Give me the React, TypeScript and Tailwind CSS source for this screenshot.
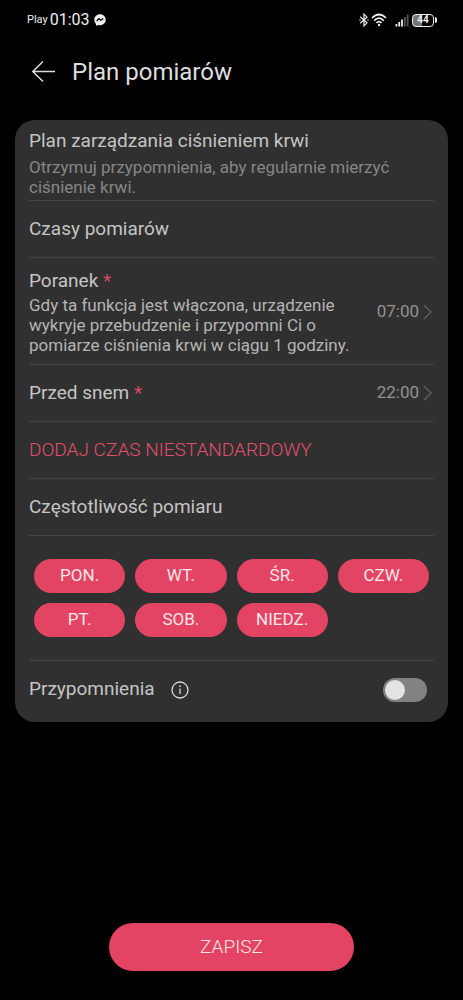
import { useState } from 'react'
import type { ReactNode } from 'react'

const DAYS = ['PON.', 'WT.', 'ŚR.', 'CZW.', 'PT.', 'SOB.', 'NIEDZ.']

export default function App() {
  const [days, setDays] = useState<string[]>(DAYS)
  const [reminders, setReminders] = useState(false)

  const toggleDay = (day: string) =>
    setDays(prev => (prev.includes(day) ? prev.filter(d => d !== day) : [...prev, day]))

  return (
    <div className="min-h-screen flex flex-col bg-black text-[#c4c4c4] font-['Roboto','Noto_Sans',sans-serif]">
      <StatusBar />

      <header className="flex items-center gap-4 h-16 pl-8">
        <button type="button" aria-label="Wstecz" className="text-[#dedede]">
          <svg width="24" height="24" viewBox="0 0 24 24" fill="none" stroke="currentColor" strokeWidth="1.5">
            <path d="M23 11.5H0.8M11 1.5L0.8 11.5L11 21.5" />
          </svg>
        </button>
        <h1 className="text-2xl text-[#dedede]">Plan pomiarów</h1>
      </header>

      <main className="mt-4 mx-[15px] px-3.5 rounded-[20px] bg-[#303030] divide-y divide-[#444444]">
        <section className="pt-[9px] pb-[3px]">
          <h2 className="text-[19px] leading-6">Plan zarządzania ciśnieniem krwi</h2>
          <p className="mt-1 text-[17px] leading-5 text-[#868686]">
            Otrzymuj przypomnienia, aby regularnie mierzyć ciśnienie krwi.
          </p>
        </section>

        <Heading>Czasy pomiarów</Heading>

        <TimeRow
          title="Poranek"
          time="07:00"
          description="Gdy ta funkcja jest włączona, urządzenie wykryje przebudzenie i przypomni Ci o pomiarze ciśnienia krwi w ciągu 1 godziny."
        />
        <TimeRow title="Przed snem" time="22:00" />

        <button type="button" className="flex items-center w-full h-[57px] text-[19px] font-light text-[#e24f6c]">
          DODAJ CZAS NIESTANDARDOWY
        </button>

        <Heading>Częstotliwość pomiaru</Heading>

        <div className="grid grid-cols-4 gap-2.5 px-[5px] py-[23px]">
          {DAYS.map(day => (
            <button
              key={day}
              type="button"
              aria-pressed={days.includes(day)}
              onClick={() => toggleDay(day)}
              className={`h-[34px] rounded-full text-[17px] text-[#f8e6ea] ${days.includes(day) ? 'bg-[#e44463]' : 'bg-[#505050]'}`}
            >
              {day}
            </button>
          ))}
        </div>

        <div className="flex items-center h-[61px] pr-[7px] pb-1">
          <label htmlFor="reminders" className="text-[19px]">Przypomnienia</label>
          <button type="button" aria-label="Informacje" className="ml-4 text-[#d8d8d8]">
            <svg width="18" height="18" viewBox="0 0 18 18" fill="none" stroke="currentColor" strokeWidth="1.3">
              <circle cx="9" cy="9" r="8" />
              <path d="M9 7.6V13" />
              <circle cx="9" cy="5.2" r="0.9" fill="currentColor" stroke="none" />
            </svg>
          </button>
          <input
            id="reminders"
            type="checkbox"
            role="switch"
            checked={reminders}
            onChange={e => setReminders(e.target.checked)}
            className="ml-auto flex items-center w-11 h-6 px-0.5 appearance-none rounded-full bg-[#828282] before:size-5 before:rounded-full before:bg-[#e4e4e4] before:content-[''] checked:justify-end checked:bg-[#e44463]"
          />
        </div>
      </main>

      <footer className="mt-auto pb-[29px] pt-6 flex justify-center">
        <button type="button" className="w-[53%] h-12 rounded-full bg-[#e44463] text-[19px] font-light text-[#fbe4e8]">
          ZAPISZ
        </button>
      </footer>
    </div>
  )
}

function Heading({ children }: { children: ReactNode }) {
  return <h2 className="flex items-center h-[57px] text-[19px]">{children}</h2>
}

function TimeRow({ title, time, description }: { title: string; time: string; description?: string }) {
  return (
    <button type="button" className={`flex items-center w-full text-left ${description ? 'pt-[11px] pb-[9px]' : 'h-[57px]'}`}>
      <span className="flex-1">
        <span className="block text-[19px] leading-6">
          {title} <span className="text-[#d64b67]">*</span>
        </span>
        {description && <span className="block mt-0.5 text-[17px] leading-5 text-[#b4b4b4]">{description}</span>}
      </span>
      <span className="ml-5 text-[17px] text-[#929292]">{time}</span>
      <svg className="ml-1 mr-0.5" width="9" height="16" viewBox="0 0 9 16" fill="none" stroke="#5c5c5c" strokeWidth="1.5">
        <path d="M1 1L8 8L1 15" />
      </svg>
    </button>
  )
}

function StatusBar() {
  return (
    <div className="flex items-center justify-between h-10 pl-[27px] pr-[26px] text-[#eeeeee]">
      <div className="flex items-center">
        <span className="text-[11px]">Play</span>
        <span className="ml-0.5 text-base">01:03</span>
        <svg className="ml-1" width="12" height="12" viewBox="0 0 12 12">
          <path d="M6 0.3C2.7 0.3 0.3 2.7 0.3 5.8C0.3 7.4 1 8.8 2 9.8V11.8L4 10.9C4.6 11.1 5.3 11.2 6 11.2C9.3 11.2 11.7 8.9 11.7 5.8C11.7 2.7 9.3 0.3 6 0.3Z" fill="#eeeeee" />
          <path d="M2.7 7.2L4.8 4.7L6.9 6.3L9.2 4.5" fill="none" stroke="#000" strokeWidth="1.3" />
        </svg>
      </div>

      <div className="flex items-center">
        <svg width="10" height="14" viewBox="0 0 10 14" fill="none" stroke="currentColor" strokeWidth="1.2">
          <path d="M1.2 3.7L8 9.8L5 12.8V1.2L8 4.2L1.2 10.3" />
          <circle cx="1" cy="7" r="0.7" fill="currentColor" stroke="none" />
          <circle cx="9" cy="7" r="0.7" fill="currentColor" stroke="none" />
        </svg>
        <svg className="ml-0.5" width="16" height="14" viewBox="0 0 16 14" fill="none" stroke="currentColor" strokeWidth="1.7">
          <path d="M1 5Q8 -2 15 5M3.2 7.6Q8 2.8 12.8 7.6M5.4 10Q8 7.4 10.6 10" />
          <circle cx="8" cy="12" r="1.2" fill="currentColor" stroke="none" />
        </svg>
        <svg className="ml-2" width="15" height="13" viewBox="0 0 15 13" fill="currentColor">
          <rect x="0.5" y="10" width="1.8" height="2.5" />
          <rect x="3.3" y="8" width="1.8" height="4.5" />
          <rect x="6.1" y="5.5" width="1.8" height="7" />
          <rect x="8.9" y="3" width="1.8" height="9.5" fill="#555" />
          <rect x="11.7" y="0.5" width="1.8" height="12" fill="#555" />
        </svg>
        <span className="ml-0.5 flex items-center justify-center w-[22px] h-[13px] rounded-[4px] border border-current bg-[linear-gradient(90deg,#777_44%,#000_44%)] text-[10px] font-bold leading-none">
          44
        </span>
        <span className="ml-px w-0.5 h-1.5 rounded-r-sm bg-current" />
      </div>
    </div>
  )
}
